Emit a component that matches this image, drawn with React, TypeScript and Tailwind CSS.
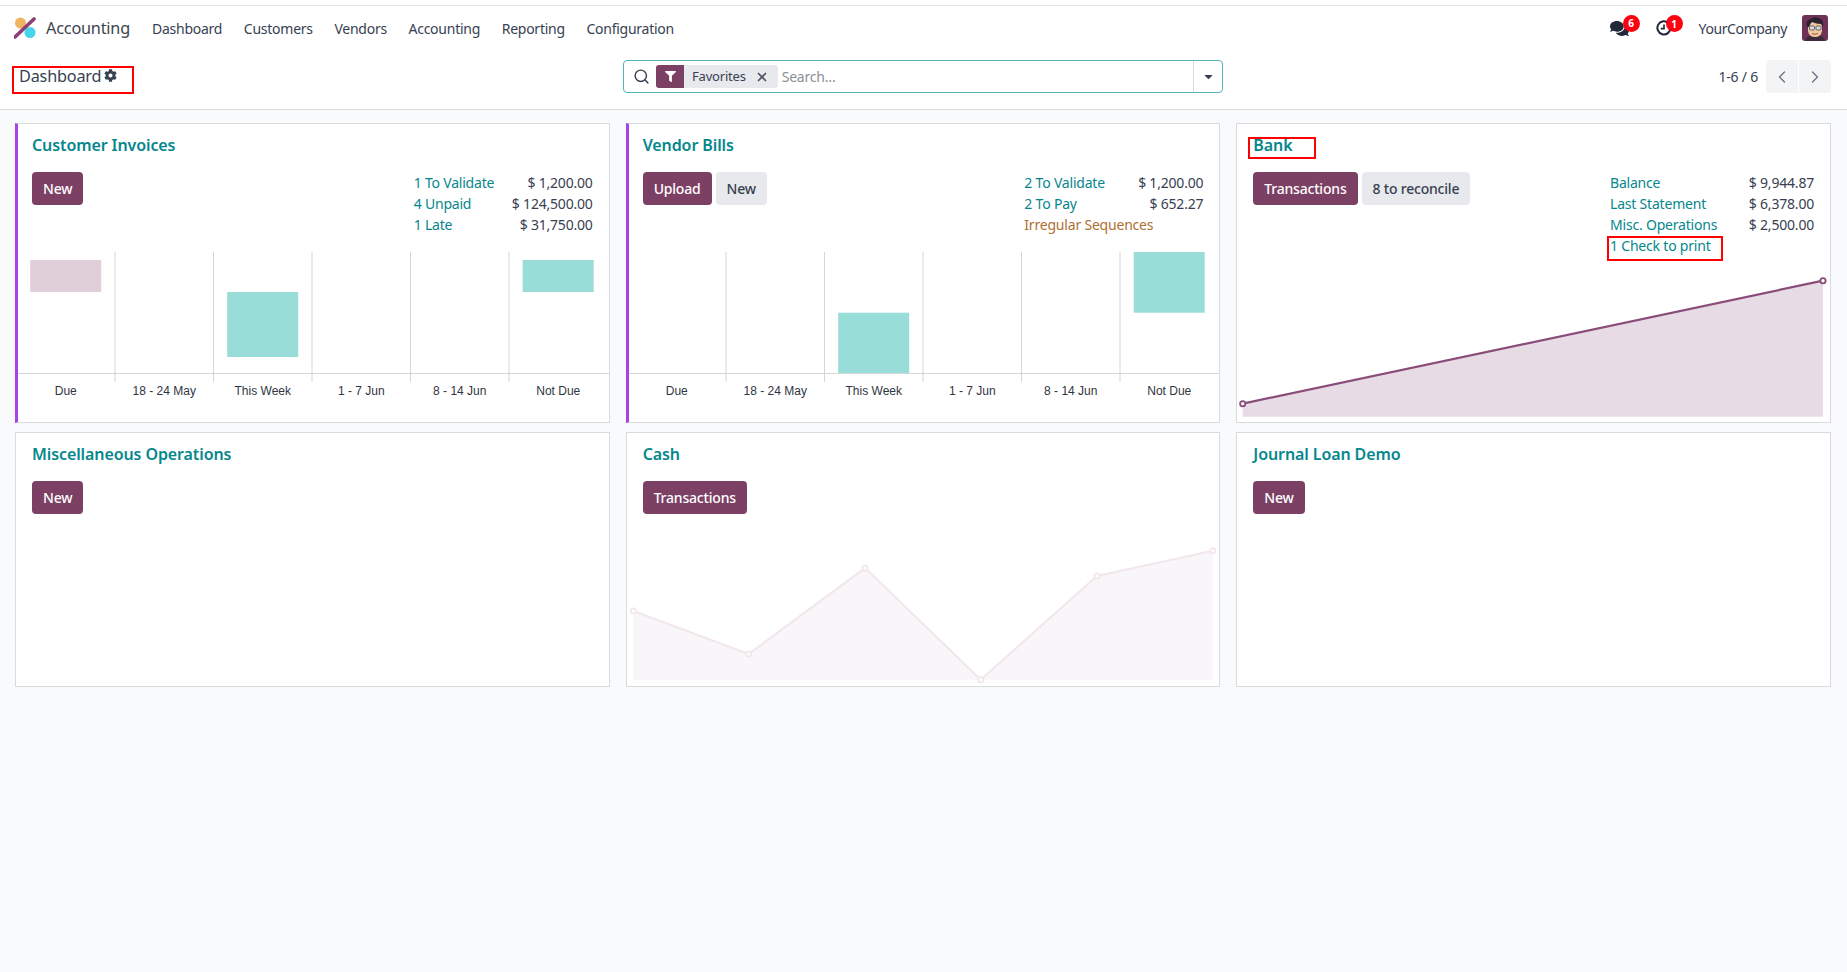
import { ChevronLeft, ChevronRight, Search, X } from "lucide-react";
import { FaCaretDown, FaCog, FaComments, FaFilter } from "react-icons/fa";

type Stat = { label: string; value?: string; warn?: boolean };
type Bar = { band: number; top: number; bottom: number; color: string };

const NAV = ["Dashboard", "Customers", "Vendors", "Accounting", "Reporting", "Configuration"];
const BANDS = ["Due", "18 - 24 May", "This Week", "1 - 7 Jun", "8 - 14 Jun", "Not Due"];
const TEAL = "#98ddd7";
const PINK = "#e0ced9";

function Logo() {
  return (
    <svg width="22" height="22" viewBox="0 0 22 22" className="shrink-0">
      <circle cx="6.5" cy="6" r="5.5" fill="#f0b35e" />
      <circle cx="16" cy="15.5" r="5.5" fill="#45d5ea" />
      <path d="M1 20 L20 2" stroke="#8b3f74" strokeWidth="3.6" strokeLinecap="round" />
    </svg>
  );
}

function Avatar() {
  return (
    <svg width="26" height="26" viewBox="0 0 26 26" className="shrink-0 rounded-[3px]">
      <rect width="26" height="26" fill="#6e3257" />
      <path d="M3 26 Q4 20 13 20 Q22 20 23 26 Z" fill="#3b2a3a" />
      <path d="M6 11 Q6 5 13 5 Q20 5 20 12 L20 16 Q19 22 13 22 Q7 22 6 16 Z" fill="#f1c9a0" />
      <path d="M5 12 Q3 5 9 4 Q11 1 17 3 Q22 5 21 12 L19 9 Q14 9 10 7 Q8 9 7 12 Z" fill="#2a2230" />
      <rect x="7.5" y="11" width="5" height="4" rx="1" fill="#d7dde0" stroke="#4c4a50" strokeWidth="0.8" />
      <rect x="14" y="11" width="5" height="4" rx="1" fill="#d7dde0" stroke="#4c4a50" strokeWidth="0.8" />
      <path d="M10 18.5 Q13 20 16 18.5" stroke="#8a4a3a" strokeWidth="0.9" fill="none" />
    </svg>
  );
}

function ActivityIcon() {
  return (
    <svg width="16" height="16" viewBox="0 0 16 16" fill="none" stroke="#1f2937" strokeWidth="2">
      <path d="M12.5 3 A6.6 6.6 0 1 0 14.6 8" />
      <path d="M8 4.5 V8.6 H4.8" strokeWidth="1.6" />
    </svg>
  );
}

function Badge({ n }: { n: number }) {
  return (
    <span className="absolute -top-[5px] -right-[11px] flex h-[17px] w-[17px] items-center justify-center rounded-full bg-[#ff0010] text-[10px] font-bold leading-none text-white">
      {n}
    </span>
  );
}

function Btn({ label, primary }: { label: string; primary?: boolean }) {
  return (
    <button
      type="button"
      className={`h-[33px] rounded-[4px] px-[11px] text-[14px] font-medium tracking-[-0.2px] ${
        primary ? "bg-[#7c4064] text-white" : "bg-[#e7e9ed] text-[#374151]"
      }`}
    >
      {label}
    </button>
  );
}

function Stats({ rows, width }: { rows: Stat[]; width: string }) {
  return (
    <div className={`text-[14px] leading-[21px] tracking-[-0.2px] ${width}`}>
      {rows.map((r) => (
        <div key={r.label} className="flex justify-between">
          <span className={r.warn ? "text-[#ad7033]" : "text-[#05878d]"}>{r.label}</span>
          {r.value && <span className="text-[#374151]">{r.value}</span>}
        </div>
      ))}
    </div>
  );
}

function BarChart({ bars }: { bars: Bar[] }) {
  const band = 98.5;
  const origin = -1.5;
  return (
    <svg width="591" height="170" viewBox="0 0 591 170" className="mt-auto block">
      {bars.map((b) => (
        <rect
          key={b.band}
          x={origin + band * b.band + 13.7}
          y={b.top}
          width="71"
          height={b.bottom - b.top}
          fill={b.color}
        />
      ))}
      {[1, 2, 3, 4, 5].map((i) => (
        <line key={i} x1={origin + band * i} x2={origin + band * i} y1="0" y2="130" stroke="#d6d6d6" />
      ))}
      <line x1="0" x2="591" y1="121.5" y2="121.5" stroke="#d6d6d6" />
      {BANDS.map((t, i) => (
        <text
          key={t}
          x={origin + band * i + 49.25}
          y="143"
          textAnchor="middle"
          fontSize="12"
          fontFamily="'Liberation Sans', sans-serif"
          fill="#2f3542"
        >
          {t}
        </text>
      ))}
    </svg>
  );
}

function LineChart({
  points,
  base,
  height,
  fill,
  stroke,
}: {
  points: number[][];
  base: number;
  height: number;
  fill: string;
  stroke: string;
}) {
  const line = points.map((p) => p.join(",")).join(" ");
  const first = points[0][0];
  const last = points[points.length - 1][0];
  return (
    <svg width="592" height={height} viewBox={`0 0 592 ${height}`} className="mt-auto block">
      <polygon points={`${first},${base} ${line} ${last},${base}`} fill={fill} />
      <polyline points={line} fill="none" stroke={stroke} strokeWidth="2.2" />
      {points.map((p) => (
        <circle key={p[0]} cx={p[0]} cy={p[1]} r="2.6" fill="#ffffff" stroke={stroke} strokeWidth="1.8" />
      ))}
    </svg>
  );
}

function Card({
  title,
  accent,
  children,
  chart,
}: {
  title: React.ReactNode;
  accent?: boolean;
  children: React.ReactNode;
  chart?: React.ReactNode;
}) {
  return (
    <div
      className={`flex flex-col overflow-hidden border border-[#d8dadd] bg-white ${
        accent ? "border-l-[3px] border-l-[#a742ea] pl-0" : ""
      }`}
    >
      <div className={`${accent ? "pl-[14px]" : "pl-[16px]"} pr-[16px]`}>
        <h2 className="pt-[9px] text-[16px] font-semibold leading-[24px] tracking-[-0.1px] text-[#05878d]">{title}</h2>
        <div className="mt-[15px] flex items-start justify-between">{children}</div>
      </div>
      {chart}
    </div>
  );
}

export default function App() {
  return (
    <div className="min-h-screen bg-[#f9fafb] font-['Noto_Sans',sans-serif] text-[#374151]">
      <header className="bg-white pt-[5px]">
        {/* Top menu */}
        <nav className="flex h-[45px] items-center border-t border-[#e2e2e2] pl-[14px] pr-[19px]">
          <Logo />
          <span className="ml-[10px] text-[16.25px] tracking-[-0.2px] text-[#3d4350]">Accounting</span>
          <div className="ml-[22px] flex gap-[21.6px] text-[14px] tracking-[-0.25px]">
            {NAV.map((n) => (
              <span key={n}>{n}</span>
            ))}
          </div>
          <div className="ml-auto flex items-center">
            <span className="relative mr-[27px]">
              <FaComments className="h-[17px] w-[19px] text-[#1f2937]" />
              <Badge n={6} />
            </span>
            <span className="relative mr-[27px]">
              <ActivityIcon />
              <Badge n={1} />
            </span>
            <span className="mr-[15px] text-[14px] tracking-[-0.4px]">YourCompany</span>
            <Avatar />
          </div>
        </nav>

        {/* Control panel */}
        <div className="grid h-[60px] grid-cols-[623px_600px_1fr] items-start border-b border-[#d8dadd] pt-[10px]">
          <div className="relative ml-[19px] flex h-[33px] items-center">
            <span className="text-[16.25px] leading-none tracking-[-0.2px]">Dashboard</span>
            <FaCog className="-mt-[2px] ml-[3px] h-[13px] w-[13px]" />
            <span className="absolute -left-[7px] top-[6px] h-[28px] w-[122px] border-2 border-[#ff0000]" />
          </div>
          <div className="flex h-[33px] items-center rounded-[4px] border border-[#4fb7bc] bg-white">
            <Search className="ml-[9px] h-[17px] w-[17px]" strokeWidth={2} />
            <div className="ml-[6px] flex h-[23px] items-center rounded-[3px] bg-[#e7e9ed] pr-[9px]">
              <span className="flex h-[23px] w-[28px] items-center justify-center rounded-l-[3px] bg-[#7c4064]">
                <FaFilter className="h-[11px] w-[11px] text-white" />
              </span>
              <span className="ml-[8px] text-[13px] tracking-[-0.2px]">Favorites</span>
              <X className="ml-[9px] h-[14px] w-[14px] text-[#4b5563]" strokeWidth={3} />
            </div>
            <span className="ml-[4px] -mt-[1px] text-[14px] tracking-[-0.2px] text-[#8b8f96]">Search...</span>
            <span className="ml-auto flex h-full w-[29px] items-center justify-center border-l border-[#d8dadd]">
              <FaCaretDown className="h-[13px] w-[13px] text-[#374151]" />
            </span>
          </div>
          <div className="flex items-center justify-end pr-[16px]">
            <span className="mr-[8px] text-[14px] tracking-[-0.2px]">1-6 / 6</span>
            <button type="button" className="flex h-[33px] w-[32px] items-center justify-center rounded-l-[4px] bg-[#f3f4f6]">
              <ChevronLeft className="h-[20px] w-[20px] text-[#6b7280]" strokeWidth={1.6} />
            </button>
            <button type="button" className="ml-px flex h-[33px] w-[32px] items-center justify-center rounded-r-[4px] bg-[#f3f4f6]">
              <ChevronRight className="h-[20px] w-[20px] text-[#6b7280]" strokeWidth={1.6} />
            </button>
          </div>
        </div>
      </header>

      {/* Journals */}
      <main className="grid grid-cols-3 grid-rows-[300px_255px] gap-x-[16px] gap-y-[9px] pl-[15px] pr-[16px] pt-[13px]">
        <Card
          accent
          title="Customer Invoices"
          chart={
            <BarChart
              bars={[
                { band: 0, top: 8, bottom: 40, color: PINK },
                { band: 2, top: 40, bottom: 105, color: TEAL },
                { band: 5, top: 8, bottom: 40, color: TEAL },
              ]}
            />
          }
        >
          <Btn label="New" primary />
          <Stats
            width="w-[179px]"
            rows={[
              { label: "1 To Validate", value: "$ 1,200.00" },
              { label: "4 Unpaid", value: "$ 124,500.00" },
              { label: "1 Late", value: "$ 31,750.00" },
            ]}
          />
        </Card>

        <Card
          accent
          title="Vendor Bills"
          chart={
            <BarChart
              bars={[
                { band: 2, top: 60.7, bottom: 121, color: TEAL },
                { band: 5, top: 0, bottom: 60.7, color: TEAL },
              ]}
            />
          }
        >
          <div className="flex gap-[4px]">
            <Btn label="Upload" primary />
            <Btn label="New" />
          </div>
          <Stats
            width="w-[179px]"
            rows={[
              { label: "2 To Validate", value: "$ 1,200.00" },
              { label: "2 To Pay", value: "$ 652.27" },
              { label: "Irregular Sequences", warn: true },
            ]}
          />
        </Card>

        <Card
          title={
            <span className="relative">
              Bank
              <span className="absolute -left-[5px] top-[3px] h-[22px] w-[68px] border-2 border-[#ff0000]" />
            </span>
          }
          chart={
            <LineChart
              height={146}
              base={140.7}
              fill="#e7dbe6"
              stroke="#8a4c78"
              points={[
                [5.7, 127.7],
                [586, 4.7],
              ]}
            />
          }
        >
          <div className="flex gap-[4px]">
            <Btn label="Transactions" primary />
            <Btn label="8 to reconcile" />
          </div>
          <div className="relative">
            <Stats
              width="w-[204px]"
              rows={[
                { label: "Balance", value: "$ 9,944.87" },
                { label: "Last Statement", value: "$ 6,378.00" },
                { label: "Misc. Operations", value: "$ 2,500.00" },
                { label: "1 Check to print" },
              ]}
            />
            <span className="absolute -left-[3px] top-[64px] h-[25px] w-[116px] border-2 border-[#ff0000]" />
          </div>
        </Card>

        <Card title="Miscellaneous Operations">
          <Btn label="New" primary />
        </Card>

        <Card
          title="Cash"
          chart={
            <LineChart
              height={141}
              base={135}
              fill="#f8f6f8"
              stroke="#f2e7ec"
              points={[
                [6.3, 66],
                [121.8, 109],
                [238, 23],
                [353.8, 134.7],
                [470, 31],
                [585.8, 5.7],
              ]}
            />
          }
        >
          <Btn label="Transactions" primary />
        </Card>

        <Card title="Journal Loan Demo">
          <Btn label="New" primary />
        </Card>
      </main>
    </div>
  );
}
